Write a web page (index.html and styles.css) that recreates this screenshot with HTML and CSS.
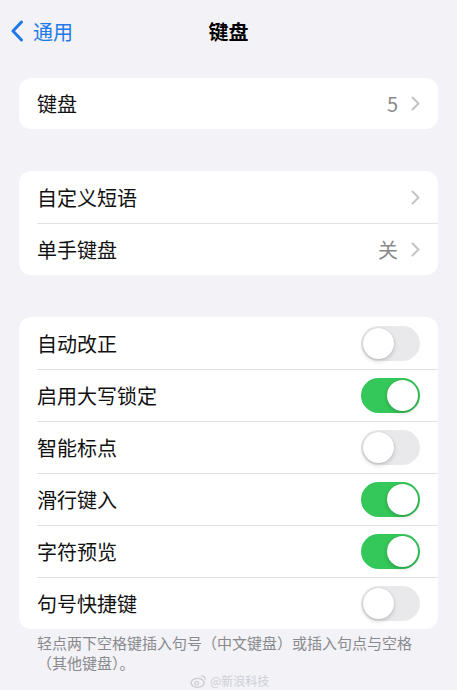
FILE: index.html
```html
<!DOCTYPE html>
<html lang="zh-CN">
<head>
  <meta charset="utf-8">
  <title>键盘</title>
  <link rel="stylesheet" href="styles.css">
</head>
<body>
  <div class="nav">
    <a class="back">
      <svg class="back-icon" width="14" height="22" viewBox="0 0 14 22"><path d="M11.5 2 L3 11 L11.5 20" fill="none" stroke="#1e7ae6" stroke-width="3" stroke-linecap="round" stroke-linejoin="round"/></svg>
      <span>通用</span>
    </a>
    <div class="title">键盘</div>
    <div></div>
  </div>

  <div class="group first">
    <div class="row">
      <span class="label">键盘</span>
      <span class="detail">5</span>
      <svg class="chev" width="9" height="15" viewBox="0 0 9 15"><path d="M1.5 1.5 L7.5 7.5 L1.5 13.5" fill="none" stroke="#c4c4c7" stroke-width="2" stroke-linecap="round" stroke-linejoin="round"/></svg>
    </div>
  </div>

  <div class="group">
    <div class="row">
      <span class="label">自定义短语</span>
      <svg class="chev" width="9" height="15" viewBox="0 0 9 15"><path d="M1.5 1.5 L7.5 7.5 L1.5 13.5" fill="none" stroke="#c4c4c7" stroke-width="2" stroke-linecap="round" stroke-linejoin="round"/></svg>
    </div>
    <div class="row">
      <span class="label">单手键盘</span>
      <span class="detail">关</span>
      <svg class="chev" width="9" height="15" viewBox="0 0 9 15"><path d="M1.5 1.5 L7.5 7.5 L1.5 13.5" fill="none" stroke="#c4c4c7" stroke-width="2" stroke-linecap="round" stroke-linejoin="round"/></svg>
    </div>
  </div>

  <div class="group">
    <div class="row">
      <span class="label">自动改正</span>
      <span class="switch"><span class="knob"></span></span>
    </div>
    <div class="row">
      <span class="label">启用大写锁定</span>
      <span class="switch on"><span class="knob"></span></span>
    </div>
    <div class="row">
      <span class="label">智能标点</span>
      <span class="switch"><span class="knob"></span></span>
    </div>
    <div class="row">
      <span class="label">滑行键入</span>
      <span class="switch on"><span class="knob"></span></span>
    </div>
    <div class="row">
      <span class="label">字符预览</span>
      <span class="switch on"><span class="knob"></span></span>
    </div>
    <div class="row">
      <span class="label">句号快捷键</span>
      <span class="switch"><span class="knob"></span></span>
    </div>
  </div>

  <p class="footer">轻点两下空格键插入句号（中文键盘）或插入句点与空格（其他键盘）。</p>

  <div class="watermark">
    <svg width="17" height="14" viewBox="0 0 18 15"><ellipse cx="8" cy="9.5" rx="7" ry="4.8" fill="none" stroke="#c9c9ce" stroke-width="1.4"/><circle cx="7" cy="10" r="2" fill="none" stroke="#c9c9ce" stroke-width="1.2"/><path d="M12 2 Q16 2 16.5 6" fill="none" stroke="#c9c9ce" stroke-width="1.3"/></svg>
    <span>@新浪科技</span>
  </div>
</body>
</html>
```

FILE: styles.css
```css
body {margin:0; background:#f2f2f7; font-family:"Noto Sans CJK SC","Noto Sans",sans-serif; color:#000; position:relative; height:690px; overflow:hidden;}

.nav {display:grid; grid-template-columns:1fr auto 1fr; align-items:center; height:50px; padding-top:6px;}
.back {display:flex; align-items:center; gap:9px; padding-left:10px; color:#1e7ae6; font-size:20px;}
.back-icon {display:block;}
.title {font-size:20px; font-weight:bold;}

.group {background:#fff; border-radius:12px; margin:42px 19px 0 19px; overflow:hidden;}
.group.first {margin-top:22px;}
.group.first .row {height:51px;}

.row {display:flex; align-items:center; height:52px; box-sizing:border-box; margin-left:18px; padding-right:18px; border-top:1px solid #e2e2e6;}
.row:first-child {border-top:none;}
.label {flex:1; font-size:20px; color:#111;}
.detail {font-size:20px; color:#8a8a8e; margin-right:13px;}
.chev {display:block;}

.switch {width:59px; height:35px; border-radius:18px; background:#e9e9eb; box-sizing:border-box; padding:2px; display:flex;}
.switch.on {background:#34c759; justify-content:flex-end;}
.knob {width:31px; height:31px; border-radius:50%; background:#fff; box-shadow:0 2px 4px rgba(0,0,0,0.18), 0 0 1px rgba(0,0,0,0.2);}

.footer {margin:4px 37px 0 37px; font-size:15px; line-height:20px; color:#8a8a8e;}

.watermark {position:absolute; left:190px; top:674px; display:flex; align-items:center; gap:3px; color:#cfcfd4; font-size:12px; line-height:12px;}
```
